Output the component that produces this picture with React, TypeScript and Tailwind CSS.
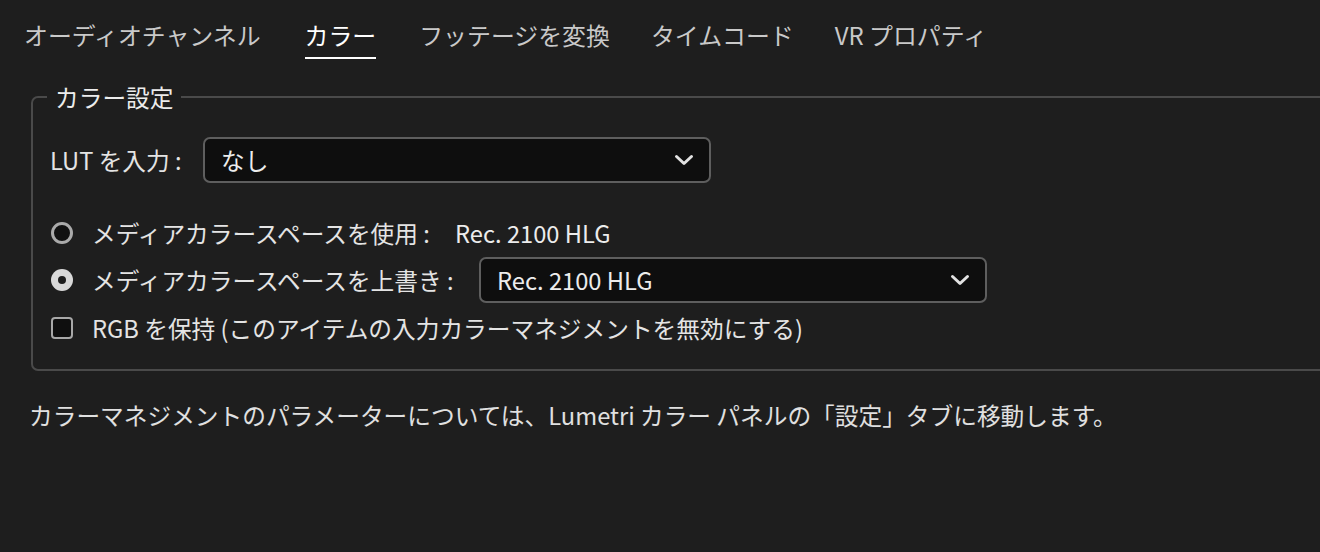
import React from "react";

const Chevron = () => (
  <svg width="20" height="14" viewBox="0 0 20 14" className="shrink-0">
    <polyline points="2.5,3.5 10,10.5 17.5,3.5" fill="none" stroke="#e2e2e2" strokeWidth="3" strokeLinecap="round" strokeLinejoin="round" />
  </svg>
);

function Select({ value, width }: { value: string; width: string }) {
  return (
    <div className={`${width} h-[46px] flex items-center justify-between rounded-[7px] border-2 border-[#5e5e5e] bg-[#0e0e0e] pl-[16px] pr-[15px]`}>
      <span className="text-[#ececec]">{value}</span>
      <Chevron />
    </div>
  );
}

export default function App() {
  const tabs = [
    { t: "オーディオチャンネル", m: "ml-0" },
    { t: "カラー", m: "ml-[44px]" },
    { t: "フッテージを変換", m: "ml-[43px]" },
    { t: "タイムコード", m: "ml-[41px]" },
    { t: "VR プロパティ", m: "ml-[41px]" },
  ];
  return (
    <div className="w-[1320px] h-[552px] overflow-hidden bg-[#1e1e1e] font-['Noto_Sans_CJK_JP','Noto_Sans',sans-serif] text-[23.7px] leading-[28px] text-[#e4e4e4]">
      <div className="flex pl-[24px] pt-[21px]">
        {tabs.map((x, i) => (
          <div
            key={x.t}
            className={
              i === 1
                ? `${x.m} pb-[8px] border-b-2 border-white text-white text-[23.9px]`
                : `${x.m} pb-[8px] border-b-2 border-transparent text-[#c9c9c9] text-[23.9px]`
            }
          >
            {x.t}
          </div>
        ))}
      </div>

      <fieldset className="mt-[24px] ml-[31px] w-[1310px] rounded-[7px] border-2 border-[#4a4a4a] px-0 pb-[18px]">
        <legend className="ml-[14px] px-[8px] leading-[28px] text-[#ececec]">カラー設定</legend>
        <div className="pl-[17px]">
          <div className="mt-[26px] flex h-[46px] items-center">
            <span className="w-[153px]">LUT を入力 :</span>
            <Select value="なし" width="w-[508px]" />
          </div>

          <div className="mt-[27px] flex h-[46px] items-center">
            <div className="ml-[1px] h-[22px] w-[22px] rounded-full border-[3.5px] border-[#aaaaaa] bg-[#111111]" />
            <span className="ml-[19px] w-[363px]">メディアカラースペースを使用 :</span>
            <span className="text-[#ececec]">Rec. 2100 HLG</span>
          </div>

          <div className="mt-[1px] flex h-[46px] items-center">
            <div className="ml-[1px] flex h-[22px] w-[22px] items-center justify-center rounded-full bg-[#d9d9d9]">
              <div className="h-[8px] w-[8px] rounded-full bg-[#1e1e1e]" />
            </div>
            <span className="ml-[19px] w-[387px]">メディアカラースペースを上書き :</span>
            <Select value="Rec. 2100 HLG" width="w-[508px]" />
          </div>

          <div className="mt-[2px] flex h-[46px] items-center">
            <div className="ml-[1px] h-[22px] w-[22px] rounded-[4px] border-[2.5px] border-[#a8a8a8] bg-[#0f0f0f]" />
            <span className="ml-[19px]">RGB を保持 (このアイテムの入力カラーマネジメントを無効にする)</span>
          </div>
        </div>
      </fieldset>

      <p className="mt-[30px] pl-[29px] text-[#e0e0e0]">
        カラーマネジメントのパラメーターについては、Lumetri カラー パネルの「設定」タブに移動します。
      </p>
    </div>
  );
}
